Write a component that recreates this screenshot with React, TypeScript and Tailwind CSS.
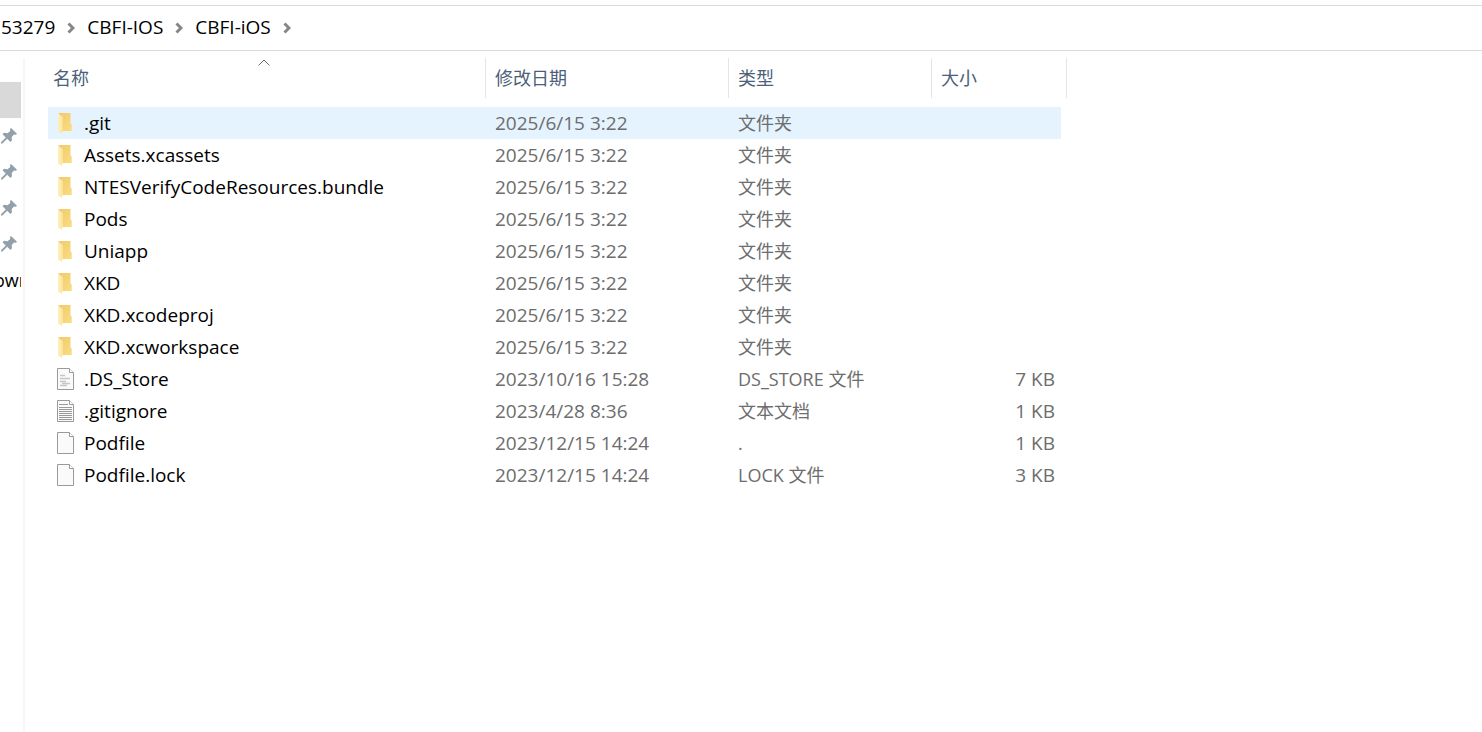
import React, { useState } from 'react';
import clsx from 'clsx';

type FileKind = 'folder' | 'config' | 'text' | 'blank';

interface FileEntry {
    name: string;
    date: string;
    type: string;
    size?: string;
    kind: FileKind;
}

const PATH = ['53279', 'CBFI-IOS', 'CBFI-iOS'];

const FILES: FileEntry[] = [
    { name: '.git', date: '2025/6/15 3:22', type: '文件夹', kind: 'folder' },
    { name: 'Assets.xcassets', date: '2025/6/15 3:22', type: '文件夹', kind: 'folder' },
    { name: 'NTESVerifyCodeResources.bundle', date: '2025/6/15 3:22', type: '文件夹', kind: 'folder' },
    { name: 'Pods', date: '2025/6/15 3:22', type: '文件夹', kind: 'folder' },
    { name: 'Uniapp', date: '2025/6/15 3:22', type: '文件夹', kind: 'folder' },
    { name: 'XKD', date: '2025/6/15 3:22', type: '文件夹', kind: 'folder' },
    { name: 'XKD.xcodeproj', date: '2025/6/15 3:22', type: '文件夹', kind: 'folder' },
    { name: 'XKD.xcworkspace', date: '2025/6/15 3:22', type: '文件夹', kind: 'folder' },
    { name: '.DS_Store', date: '2023/10/16 15:28', type: 'DS_STORE 文件', size: '7 KB', kind: 'config' },
    { name: '.gitignore', date: '2023/4/28 8:36', type: '文本文档', size: '1 KB', kind: 'text' },
    { name: 'Podfile', date: '2023/12/15 14:24', type: '.', size: '1 KB', kind: 'blank' },
    { name: 'Podfile.lock', date: '2023/12/15 14:24', type: 'LOCK 文件', size: '3 KB', kind: 'blank' },
];

function FolderIcon() {
    return (
        <svg width="18" height="22" viewBox="0 0 18 22" className="shrink-0">
            <defs>
                <linearGradient id="folder-back" x1="0" y1="0" x2="1" y2="1">
                    <stop offset="0" stopColor="#efca6c" />
                    <stop offset="1" stopColor="#fbdc80" />
                </linearGradient>
                <linearGradient id="folder-front" x1="0" y1="0" x2="1" y2="0">
                    <stop offset="0" stopColor="#fff0bd" />
                    <stop offset="1" stopColor="#fde39b" />
                </linearGradient>
            </defs>
            <path d="M1.500 1h12v10.500l1.200 1V19H1.500z" fill="url(#folder-back)" />
            <path d="M1 1.200L5.800 5v13.500L4.500 21.800 1 19.200z" fill="url(#folder-front)" />
        </svg>
    );
}

function PageIcon({ kind }: { kind: FileKind }) {
    return (
        <svg width="18" height="22" viewBox="0 0 18 22" className="shrink-0">
            <path d="M.5.5h12l4 4v17H.5z" fill="#fafafa" stroke="#9a9a9a" />
            <path d="M12.5.5v4h4" fill="#fff" stroke="#9a9a9a" />
            {kind === 'config' && (
                <path d="M3 7.500h5M3 10.500h10M3 13.500h6M5 15.500h8M3 17.500h7" stroke="#c3c7ca" strokeWidth="1.500" fill="none" />
            )}
            {kind === 'text' && (
                <path d="M2 4.500h9M2 7.500h13M2 9.500h13M2 11.500h13M2 13.500h13M2 15.500h13M2 17.500h13M2 19.500h13" stroke="#999" fill="none" />
            )}
        </svg>
    );
}

function PinIcon() {
    return (
        <svg width="16" height="16" viewBox="0 0 16 16" className="shrink-0" fill="#93a0a9">
            <path d="M10 0l6 5.800-1.200 1-1.800-.3-2.300 2.500.3 3.200L9.500 14 6.200 10.800 1.500 15.500H0v-1.300l4.800-4.700L1.500 6.200 3 4.800l3.500.4L9.300 3 9 1z" />
        </svg>
    );
}

function Chevron() {
    return (
        <svg width="8" height="12" viewBox="0 0 8 12" className="mt-0.5 shrink-0">
            <path d="M1.500 1.500L6 6l-4.500 4.500" fill="none" stroke="#868686" strokeWidth="3" />
        </svg>
    );
}

export default function App() {
    const [selected, setSelected] = useState('.git');

    return (
        <div className="flex min-h-screen flex-col bg-white pt-[5px] font-['Open_Sans','Noto_Sans_CJK_SC',sans-serif] text-[19px] leading-8 text-black">
            <nav className="flex h-[46px] items-center gap-3 border-y border-[#d9d9d9] pb-0.5 pl-px">
                {PATH.map(part => (
                    <React.Fragment key={part}>
                        <button>{part}</button>
                        <Chevron />
                    </React.Fragment>
                ))}
            </nav>

            <div className="flex flex-1 pt-[7px]">
                {/* Quick access, scrolled so only its right edge shows */}
                <aside className="w-[25px] shrink-0 border-r-2 border-[#f7f7f7] pt-6">
                    <div className="w-[21px] overflow-hidden">
                        <div className="h-9 bg-[#d9d9d9]" />
                        {[1, 2, 3, 4].map(pin => (
                            <div key={pin} className="flex h-9 items-center pl-px">
                                <PinIcon />
                            </div>
                        ))}
                        <div className="-ml-1.5 h-9 text-[18px] leading-9">own</div>
                    </div>
                </aside>

                <main className="pl-[23px]">
                    <table className="w-[1019px] table-fixed border-collapse text-left">
                        <colgroup>
                            <col className="w-[438px]" />
                            <col className="w-[243px]" />
                            <col className="w-[203px]" />
                            <col className="w-[129px]" />
                            <col className="w-[6px]" />
                        </colgroup>
                        <thead>
                            <tr className="h-10 text-[18px] text-[#4c607a] *:p-0 *:font-normal">
                                <th>
                                    <div className="relative h-10 border-r border-[#e5e5e5] pl-[5px] leading-10">
                                        名称
                                        <svg width="12" height="7" viewBox="0 0 12 7" className="absolute top-px left-[210px]">
                                            <path d="M.5 6.500L6 1l5.500 5.500" fill="none" stroke="#6d6d6d" />
                                        </svg>
                                    </div>
                                </th>
                                <th><div className="h-10 border-r border-[#e5e5e5] pl-[9px] leading-10">修改日期</div></th>
                                <th><div className="h-10 border-r border-[#e5e5e5] pl-[9px] leading-10">类型</div></th>
                                <th colSpan={2}><div className="h-10 border-r border-[#e5e5e5] pl-[9px] leading-10">大小</div></th>
                            </tr>
                            <tr className="h-[9px]" />
                        </thead>
                        <tbody>
                            {FILES.map(file => (
                                <tr
                                    key={file.name}
                                    onClick={() => setSelected(file.name)}
                                    className={clsx('h-8 text-[#6d6d6d] *:p-0', selected === file.name && '*:not-last:bg-[#e5f3ff]')}
                                >
                                    <td>
                                        <div className="flex h-8 items-center gap-[9px] pl-[9px] text-black">
                                            {file.kind === 'folder' ? <FolderIcon /> : <PageIcon kind={file.kind} />}
                                            <span>{file.name}</span>
                                        </div>
                                    </td>
                                    <td><div className="h-8 pl-[9px]">{file.date}</div></td>
                                    <td><div className="h-8 pl-[9px] text-[18px]">{file.type}</div></td>
                                    <td><div className="h-8 pr-[6px] text-right">{file.size}</div></td>
                                    <td />
                                </tr>
                            ))}
                        </tbody>
                    </table>
                </main>
            </div>
        </div>
    );
}
